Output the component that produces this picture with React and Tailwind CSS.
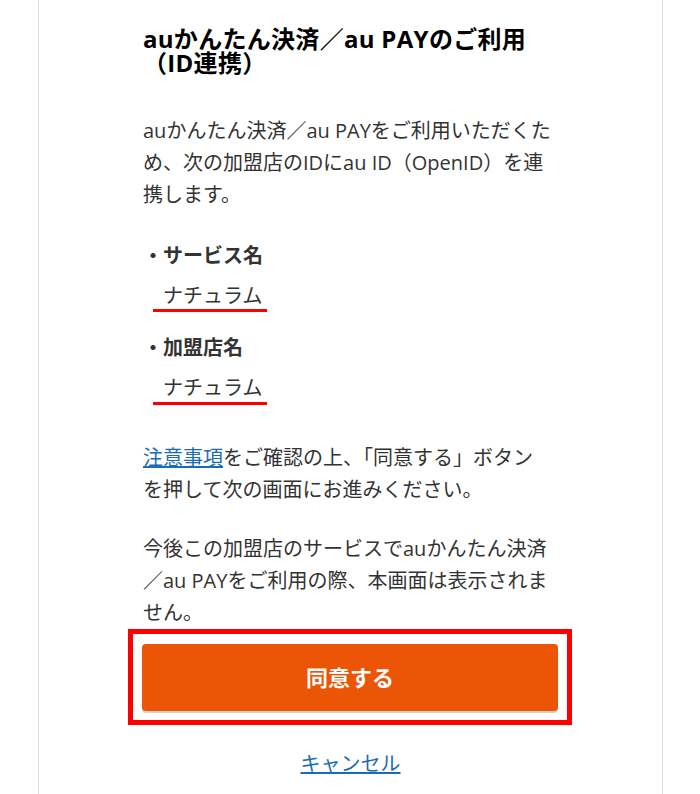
export default function App() {
  return (
    <div
      className="min-h-[794px] bg-white"
      style={{ fontFamily: '"Open Sans", "Noto Sans CJK JP", sans-serif' }}
    >
      <div className="ml-[38px] w-[625px] min-h-[794px] border-x border-[#dddddd] px-[104px] pt-[27px]">
        <h1 className="whitespace-nowrap text-[24px] leading-[24px] font-bold tracking-[0.3px] text-black">
          auかんたん決済／au PAYのご利用
          <br />
          （ID連携）
        </h1>

        <p className="mt-[40px] whitespace-nowrap text-[20px] leading-[32px] text-[#333333]">
          auかんたん決済／au PAYをご利用いただくた
          <br />
          め、次の加盟店のIDにau ID（OpenID）を連
          <br />
          携します。
        </p>

        <div className="mt-[29px] text-[20px] leading-[32px] font-bold text-[#333333]">
          ・サービス名
        </div>
        <div className="mt-[10px] pl-[10px]">
          <span className="inline-block border-b-[3px] border-[#ff0000] pl-[10px] pr-[5px] text-[20px] leading-[27px] text-[#333333]">
            ナチュラム
          </span>
        </div>

        <div className="mt-[20px] text-[20px] leading-[32px] font-bold text-[#333333]">
          ・加盟店名
        </div>
        <div className="mt-[10px] pl-[10px]">
          <span className="inline-block border-b-[3px] border-[#ff0000] pl-[10px] pr-[5px] text-[20px] leading-[28px] text-[#333333]">
            ナチュラム
          </span>
        </div>

        <p className="mt-[37px] whitespace-nowrap text-[20px] leading-[32px] text-[#333333]">
          <a href="#" className="text-[#1a6db5] underline">
            注意事項
          </a>
          をご確認の上、「同意する」ボタン
          <br />
          を押して次の画面にお進みください。
        </p>

        <p className="mt-[27px] whitespace-nowrap text-[20px] leading-[32px] text-[#333333]">
          今後この加盟店のサービスでauかんたん決済
          <br />
          ／au PAYをご利用の際、本画面は表示されま
          <br />
          せん。
        </p>

        <div className="mt-0 -ml-[15px] -mr-[14px] border-[5px] border-[#ff0000] px-[9px] pt-[10px] pb-[9px]">
          <button className="flex h-[67px] w-full items-center justify-center rounded-[4px] bg-[#eb5505] text-[22px] font-bold text-white shadow-[0_2px_1px_rgba(0,0,0,0.2)]">
            同意する
          </button>
        </div>

        <div className="mt-[23px] text-center text-[20px] leading-[32px]">
          <a href="#" className="text-[#1a6db5] underline">
            キャンセル
          </a>
        </div>
      </div>
    </div>
  );
}
